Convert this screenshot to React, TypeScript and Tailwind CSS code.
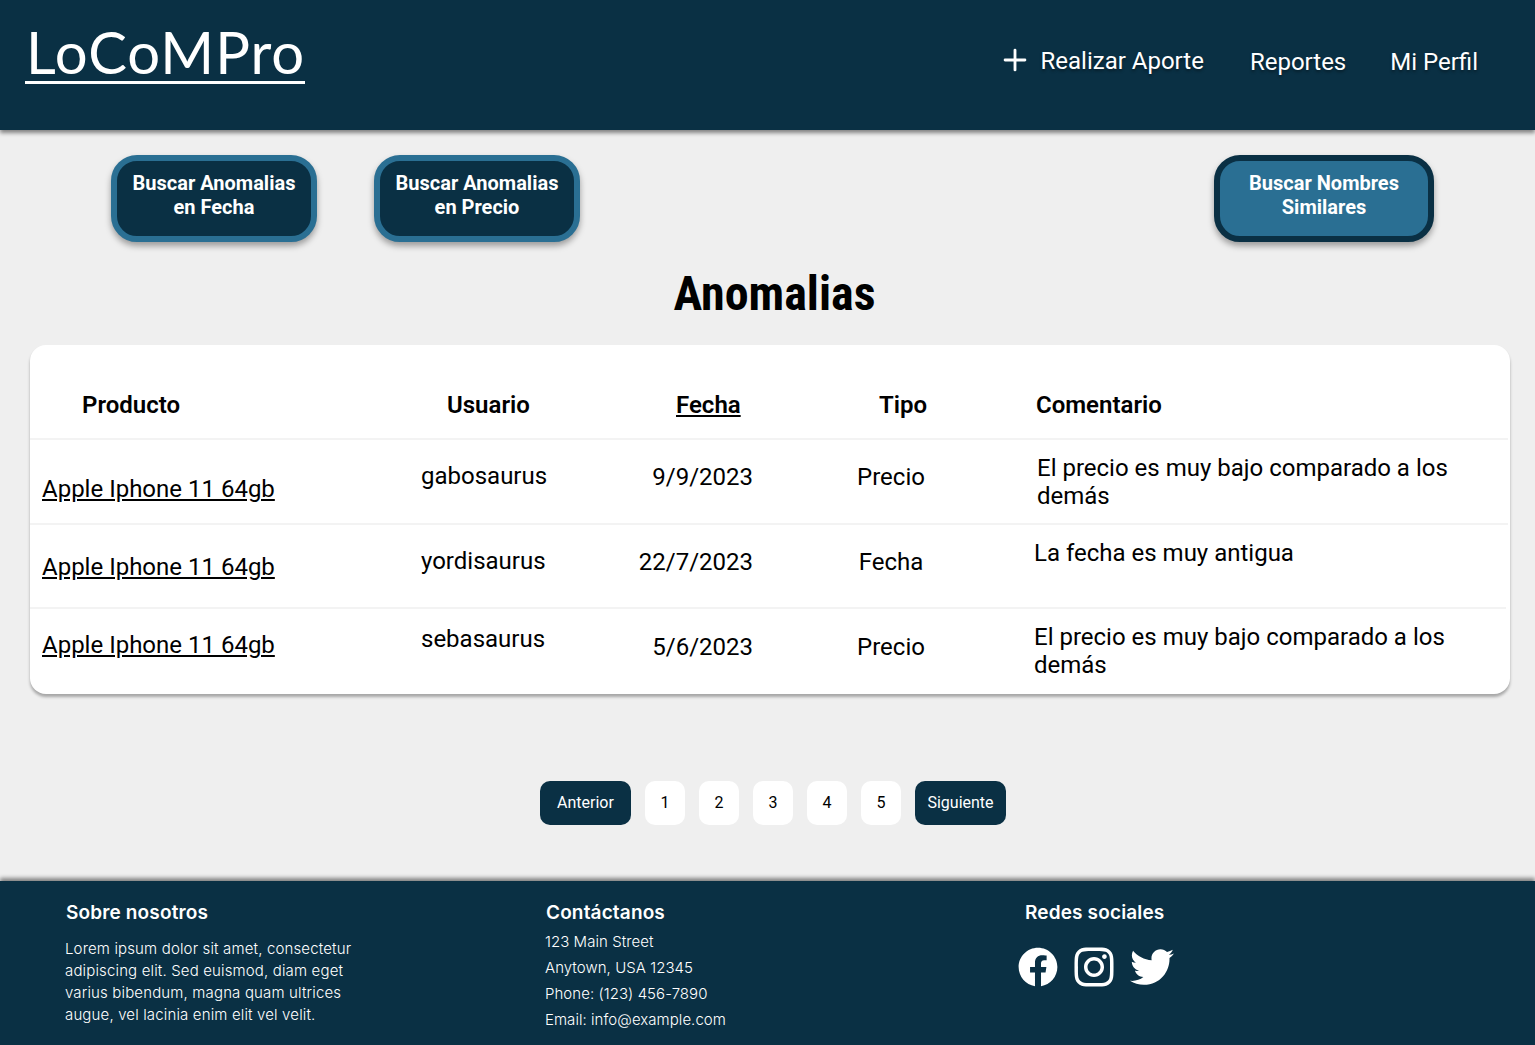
import { Plus } from 'lucide-react';
import { FaFacebook, FaTwitter } from 'react-icons/fa';
import { AiOutlineInstagram } from 'react-icons/ai';

const rows = [
  {
    user: 'gabosaurus',
    date: '9/9/2023',
    type: 'Precio',
    comment: 'El precio es muy bajo comparado a los demás',
    rowClass: 'mr-[2px] h-[85px] border-b-2 border-[#f3f3f3]',
    productClass: 'pt-[35px]',
    userClass: 'pt-[22px]',
    dateClass: 'pt-[23px]',
    typeClass: 'pt-[23px]',
    commentClass: 'pt-[14px] pl-[47px]',
  },
  {
    user: 'yordisaurus',
    date: '22/7/2023',
    type: 'Fecha',
    comment: 'La fecha es muy antigua',
    rowClass: 'mr-[4px] h-[84px] border-b-2 border-[#f3f3f3]',
    productClass: 'pt-[28px]',
    userClass: 'pt-[22px]',
    dateClass: 'pt-[23px]',
    typeClass: 'pt-[23px]',
    commentClass: 'pt-[14px] pl-[44px]',
  },
  {
    user: 'sebasaurus',
    date: '5/6/2023',
    type: 'Precio',
    comment: 'El precio es muy bajo comparado a los demás',
    rowClass: 'h-[85px]',
    productClass: 'pt-[22px]',
    userClass: 'pt-[16px]',
    dateClass: 'pt-[24px]',
    typeClass: 'pt-[24px]',
    commentClass: 'pt-[14px] pl-[44px]',
  },
];

function ActionButton({ label, second, className }: { label: string; second: string; className: string }) {
  return (
    <button className={`h-[87px] rounded-[26px] border-[6px] pb-[7px] text-[20px] leading-[24px] font-bold text-white shadow-[0_4px_6px_rgba(0,0,0,0.35)] [font-stretch:90%] ${className}`}>
      {label}
      <br />
      {second}
    </button>
  );
}

export default function App() {
  return (
    <div className="flex min-h-screen flex-col bg-[#efefef] font-['Roboto',sans-serif] text-black">
      {/* Header */}
      <header className="flex h-[130px] items-start justify-between bg-[#0a3044] pl-[25px] pr-[57px] shadow-[0_3px_4px_rgba(0,0,0,0.45)]">
        <a className="mt-[25px] block border-b-[3px] border-white pb-[2px] pl-px font-['Lato',sans-serif] text-[58px] leading-[54px] font-normal tracking-[1px] text-white">
          LoCoMPro
        </a>
        <nav className="mt-[44px] flex items-center text-[24px] font-normal text-white [text-shadow:0_2px_3px_rgba(0,0,0,0.4)]">
          <Plus className="mr-[8px] -mt-[4px] h-[34px] w-[34px]" strokeWidth={2} />
          <span className="mr-[46px] -mt-[2px]">Realizar Aporte</span>
          <span className="mr-[44px]">Reportes</span>
          <span>Mi Perfil</span>
        </nav>
      </header>

      {/* Actions */}
      <div className="flex pl-[111px] pr-[101px] pt-[25px]">
        <ActionButton label="Buscar Anomalias" second="en Fecha" className="w-[206px] border-[#2a6f93] bg-[#0a3044]" />
        <ActionButton label="Buscar Anomalias" second="en Precio" className="ml-[57px] w-[206px] border-[#2a6f93] bg-[#0a3044]" />
        <ActionButton label="Buscar Nombres" second="Similares" className="ml-auto w-[220px] border-[#0a3044] bg-[#2a6f93]" />
      </div>

      <h1 className="mt-[22px] pl-[14px] text-center text-[48px] leading-[60px] font-bold [font-stretch:75%]">Anomalias</h1>

      {/* Table */}
      <section className="ml-[30px] mr-[25px] mt-[21px] rounded-[16px] bg-white text-[24px] leading-[28px] font-normal shadow-[0_3px_3px_rgba(0,0,0,0.3)]">
        <div className="mr-[2px] grid h-[95px] grid-cols-[370px_200px_190px_200px_1fr] items-center border-b-2 border-[#f3f3f3] pt-[27px] text-[24px] font-semibold">
          <span className="pl-[52px]">Producto</span>
          <span className="pl-[47px]">Usuario</span>
          <span className="pl-[76px] underline">Fecha</span>
          <span className="pl-[89px]">Tipo</span>
          <span className="pl-[46px]">Comentario</span>
        </div>
        {rows.map((row) => (
          <div key={row.user} className={`grid grid-cols-[370px_200px_190px_200px_1fr] ${row.rowClass}`}>
            <a className={`pl-[12px] underline ${row.productClass}`}>Apple Iphone 11 64gb</a>
            <span className={`pl-[21px] ${row.userClass}`}>{row.user}</span>
            <span className={`pr-[37px] text-right ${row.dateClass}`}>{row.date}</span>
            <span className={`pl-[2px] text-center ${row.typeClass}`}>{row.type}</span>
            <p className={`pr-[46px] ${row.commentClass}`}>{row.comment}</p>
          </div>
        ))}
      </section>

      {/* Pagination */}
      <div className="mt-[87px] flex justify-center gap-[14px] pl-[11px] text-[16px]">
        <button className="h-[44px] w-[91px] rounded-[10px] bg-[#0a3044] text-white">Anterior</button>
        {[1, 2, 3, 4, 5].map((page) => (
          <button key={page} className="h-[44px] w-[40px] rounded-[10px] bg-white">
            {page}
          </button>
        ))}
        <button className="h-[44px] w-[91px] rounded-[10px] bg-[#0a3044] text-white">Siguiente</button>
      </div>

      {/* Footer */}
      <footer className="mt-auto grid h-[164px] grid-cols-[480px_479px_1fr] bg-[#0a3044] pl-[65px] pt-[20px] font-['Inter',sans-serif] text-[15px] font-light text-white shadow-[0_-3px_4px_rgba(0,0,0,0.45)]">
        <div>
          <h3 className="pl-px text-[19px] leading-[24px] font-semibold tracking-[0.15px]">Sobre nosotros</h3>
          <p className="mt-[13px] w-[300px] leading-[22px] tracking-[0.15px]">
            Lorem ipsum dolor sit amet, consectetur adipiscing elit. Sed euismod, diam eget varius bibendum, magna quam ultrices augue, vel lacinia enim elit vel velit.
          </p>
        </div>
        <div>
          <h3 className="pl-px text-[19px] leading-[24px] font-semibold tracking-[0.15px]">Contáctanos</h3>
          <div className="mt-[4px] leading-[26px] tracking-[0.05px]">
            <p>123 Main Street</p>
            <p>Anytown, USA 12345</p>
            <p>Phone: (123) 456-7890</p>
            <p>Email: info@example.com</p>
          </div>
        </div>
        <div>
          <h3 className="pl-px text-[19px] leading-[24px] font-semibold tracking-[0.15px]">Redes sociales</h3>
          <div className="mt-[17px] -ml-[6px] flex items-center gap-[11px] text-[40px]">
            <FaFacebook />
            <AiOutlineInstagram className="text-[50px]" />
            <FaTwitter className="text-[44px]" />
          </div>
        </div>
      </footer>
    </div>
  );
}
